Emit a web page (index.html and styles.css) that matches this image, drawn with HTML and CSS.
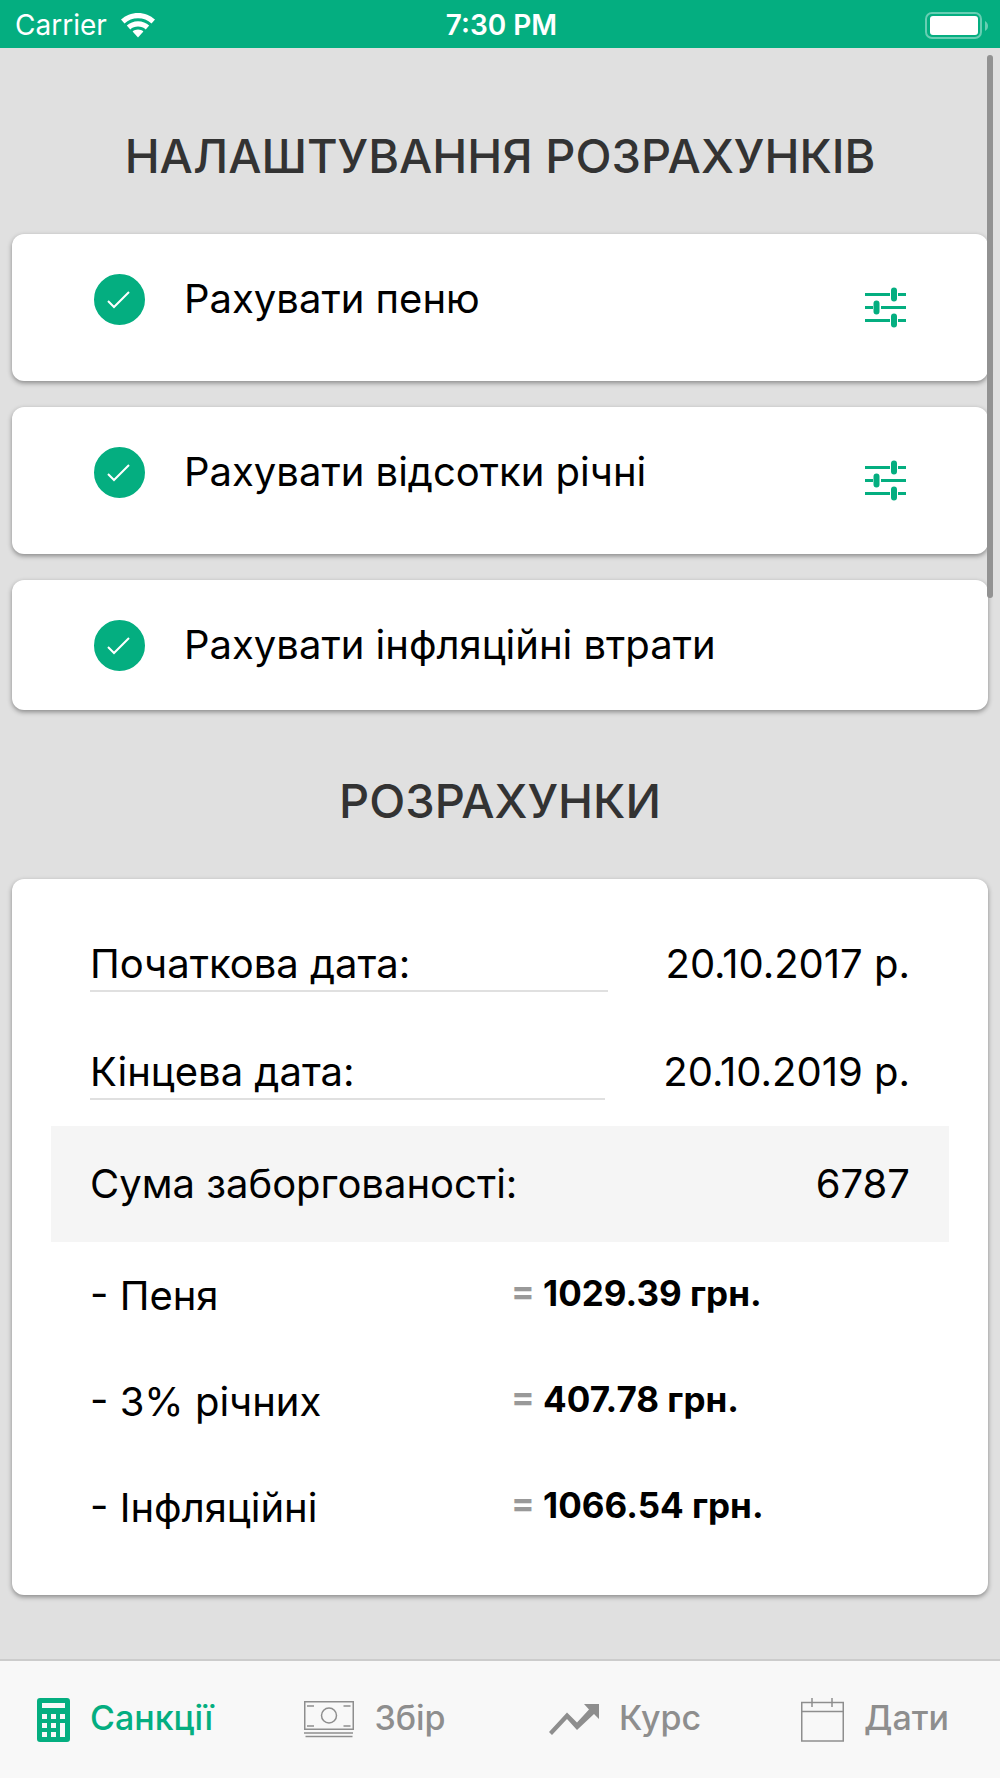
FILE: index.html
```html
<!DOCTYPE html>
<html lang="uk">
  <head>
    <meta charset="UTF-8" />
    <meta name="viewport" content="width=device-width, initial-scale=1.0" />
    <title>Розрахунки</title>
    <link rel="stylesheet" href="styles.css">
  </head>
  <body>
    <header class="status-bar">
      <div class="carrier">
        <span>Carrier</span>
        <svg width="34" height="25" viewBox="0 0 34 25" fill="#fff">
          <path d="M17 0C10.500 0 4.500 2.500 0 6.600L3.500 10.500C7.200 7.200 11.800 5.300 17 5.300s9.800 1.900 13.500 5.200L34 6.600C29.500 2.500 23.500 0 17 0z" />
          <path d="M17 8.300c-4.300 0-8.200 1.600-11.200 4.200l3.500 3.900c2.100-1.800 4.800-2.800 7.700-2.800s5.600 1 7.700 2.800l3.500-3.900C25.200 9.900 21.300 8.300 17 8.300z" />
          <path d="M17 16.600c-2 0-3.900.7-5.400 1.900L17 24.500l5.400-6C20.900 17.300 19 16.600 17 16.600z" />
        </svg>
      </div>
      <div class="time">7:30 PM</div>
      <div class="battery">
        <svg width="63" height="27" viewBox="0 0 63 27">
          <rect x="1" y="1" width="55" height="25" rx="6" fill="none" stroke="#fff" stroke-opacity="0.4" stroke-width="2" />
          <rect x="5" y="4" width="48" height="19" rx="3" fill="#fff" />
          <path d="M60 9c4 2 4 8 0 10z" fill="#fff" fill-opacity="0.4" />
        </svg>
      </div>
    </header>

    <main class="content">
      <div class="scrollbar"></div>

      <h1>НАЛАШТУВАННЯ РОЗРАХУНКІВ</h1>
      <div class="options">
        <div class="card option">
          <label>
            <span class="check">
              <input type="checkbox" checked />
              <svg viewBox="0 0 51 51"><path d="M14 27l6 6 15-15" /></svg>
            </span>
            Рахувати пеню
          </label>
          <button class="settings" type="button" aria-label="Налаштування пені">
            <svg width="41" height="41" viewBox="0 0 41 41">
              <path class="line" d="M0 7.500h25M33 7.500h8M0 20.500h8M16 20.500h25M0 33.500h25M33 33.500h8" />
              <path class="knob" d="M29 3.500v8M11.500 16.500v8M29 29.500v8" />
            </svg>
          </button>
        </div>
        <div class="card option">
          <label>
            <span class="check">
              <input type="checkbox" checked />
              <svg viewBox="0 0 51 51"><path d="M14 27l6 6 15-15" /></svg>
            </span>
            Рахувати відсотки річні
          </label>
          <button class="settings" type="button" aria-label="Налаштування відсотків">
            <svg width="41" height="41" viewBox="0 0 41 41">
              <path class="line" d="M0 7.500h25M33 7.500h8M0 20.500h8M16 20.500h25M0 33.500h25M33 33.500h8" />
              <path class="knob" d="M29 3.500v8M11.500 16.500v8M29 29.500v8" />
            </svg>
          </button>
        </div>
        <div class="card option">
          <label>
            <span class="check">
              <input type="checkbox" checked />
              <svg viewBox="0 0 51 51"><path d="M14 27l6 6 15-15" /></svg>
            </span>
            Рахувати інфляційні втрати
          </label>
        </div>
      </div>

      <h2>РОЗРАХУНКИ</h2>
      <form class="card calc">
        <div class="date-row">
          <label for="startDate">Початкова дата:</label>
          <button id="startDate" type="button">20.10.2017 р.</button>
        </div>
        <div class="date-row">
          <label for="endDate">Кінцева дата:</label>
          <button id="endDate" type="button">20.10.2019 р.</button>
        </div>
        <div class="sum-row">
          <label for="sum">Сума заборгованості:</label>
          <input id="sum" type="text" inputmode="numeric" value="6787" />
        </div>
        <dl class="results">
          <div>
            <dt>- Пеня</dt>
            <dd><span>=</span> 1029.39 грн.</dd>
          </div>
          <div>
            <dt>- 3% річних</dt>
            <dd><span>=</span> 407.78 грн.</dd>
          </div>
          <div>
            <dt>- Інфляційні</dt>
            <dd><span>=</span> 1066.54 грн.</dd>
          </div>
        </dl>
      </form>
    </main>

    <nav class="tabs">
      <a class="active" href="#sanctions">
        <svg width="33" height="44" viewBox="0 0 33 44">
          <path fill="currentColor" fill-rule="evenodd" d="M3 0h27a3 3 0 0 1 3 3v38a3 3 0 0 1-3 3H3a3 3 0 0 1-3-3V3a3 3 0 0 1 3-3zM5 5v5h23V5zM5 16v5h5v-5zM14 16v5h5v-5zM23 16v5h5v-5zM5 25v5h5v-5zM14 25v5h5v-5zM23 25v14h5V25zM5 34v5h5v-5zM14 34v5h5v-5z" />
        </svg>
        Санкції
      </a>
      <a href="#fee">
        <svg width="50" height="37" viewBox="0 0 50 37" fill="none" stroke="currentColor" stroke-width="1.500">
          <path d="M.75.75h48.500v27.500H.75zM0 32h49M1.500 35.500h47M3 5h7M39.500 5h7M3 25h7M39.500 25h7" />
          <circle cx="25" cy="14.500" r="7.500" />
        </svg>
        Збір
      </a>
      <a href="#rate">
        <svg width="50" height="31" viewBox="0 0 50 31">
          <path fill="currentColor" d="M35 0h15v15l-5-5-17 16-10-11L3 31l-3-3L18 8.500l10 10L40 5.500z" />
        </svg>
        Курс
      </a>
      <a href="#dates">
        <svg width="43" height="44" viewBox="0 0 43 44" fill="none" stroke="currentColor" stroke-width="1.500">
          <path d="M.75 4.500h41.500v38.500H.75zM.75 13.500h41.500M11 0v9M31 0v9" />
        </svg>
        Дати
      </a>
    </nav>
  </body>
</html>
```
FILE: styles.css
```css
* {
  box-sizing: border-box;
}
body {
  font-family: "Inter", "Liberation Sans", sans-serif;
  font-size: 40px;
  line-height: 48px;
  background: #e0e0e0;
  color: #000;
  display: flex;
  flex-direction: column;
  min-height: 100vh;
  margin: 0;
}
button,
input {
  font: inherit;
  color: inherit;
  border: none;
  background: none;
  padding: 0;
  margin: 0;
}
button {
  cursor: pointer;
}
svg {
  display: block;
  flex: none;
}

.status-bar {
  display: grid;
  grid-template-columns: 1fr auto 1fr;
  align-items: center;
  background: #04ae80;
  color: #fff;
  font-size: 28px;
  line-height: 34px;
  height: 48px;
  padding: 2px 12px 0 15px;
}
.carrier {
  display: flex;
  align-items: center;
  gap: 14px;
}
.time {
  font-weight: 600;
}
.battery {
  justify-self: end;
}

.content {
  position: relative;
  flex: 1;
  padding: 17px 12px 63px;
}
.scrollbar {
  position: absolute;
  top: 7px;
  right: 7px;
  width: 6px;
  height: 543px;
  border-radius: 3px;
  background: #929292;
}
h1,
h2 {
  color: #333;
  font-size: 47px;
  font-weight: 500;
  line-height: 58px;
  text-align: center;
  margin: 0;
  padding: 62px 0 49px;
}
.card {
  background: #fff;
  border-radius: 12px;
  box-shadow: 0 2px 5px rgba(0, 0, 0, 0.4);
}

.options {
  display: flex;
  flex-direction: column;
  gap: 26px;
}
.option {
  display: flex;
  align-items: flex-start;
  justify-content: space-between;
  padding: 0 82px;
}
.option label {
  display: flex;
  align-items: center;
  gap: 39px;
  min-height: 130px;
}
.check {
  display: grid;
  width: 51px;
  height: 51px;
}
.check input {
  grid-area: 1 / 1;
  appearance: none;
  border: 2px solid #04ae80;
  border-radius: 50%;
}
.check input:checked {
  background: #04ae80;
}
.check svg {
  grid-area: 1 / 1;
  fill: none;
  stroke: #fff;
  stroke-width: 2;
  pointer-events: none;
}
.settings {
  padding: 53px 0;
}
.settings .line {
  stroke: #04ae80;
  stroke-width: 3;
}
.settings .knob {
  stroke: #04ae80;
  stroke-width: 6;
  stroke-linecap: round;
}

.calc {
  padding: 61px 39px 63px;
}
.date-row {
  display: flex;
  gap: 58px;
  padding: 0 39px;
  margin-bottom: 56px;
}
.date-row label {
  flex: 1;
  padding-bottom: 2px;
  border-bottom: 2px solid #e0e0e0;
}
.date-row button {
  align-self: flex-start;
}
.sum-row {
  display: flex;
  justify-content: space-between;
  background: #f5f5f5;
  padding: 34px 39px;
  margin-top: -30px;
}
.sum-row input {
  width: 200px;
  height: 48px;
  text-align: right;
}
.results {
  display: flex;
  flex-direction: column;
  gap: 58px;
  margin: 30px 0 0;
  padding: 0 39px;
}
.results div {
  display: flex;
  align-items: flex-start;
}
.results dt {
  width: 421px;
}
.results dd {
  font-size: 35px;
  font-weight: 700;
  line-height: 42px;
  margin: 0;
}
.results span {
  color: #999;
}

.tabs {
  display: grid;
  grid-template-columns: repeat(4, 1fr);
  background: #f8f8f8;
  border-top: 2px solid #ccc;
  height: 119px;
}
.tabs a {
  display: flex;
  align-items: center;
  justify-content: center;
  gap: 20px;
  color: #8e8e8e;
  font-size: 34px;
  font-weight: 500;
  text-decoration: none;
  padding-bottom: 4px;
}
.tabs svg {
  margin-top: 4px;
}
.tabs .active {
  color: #04ae80;
}
```
